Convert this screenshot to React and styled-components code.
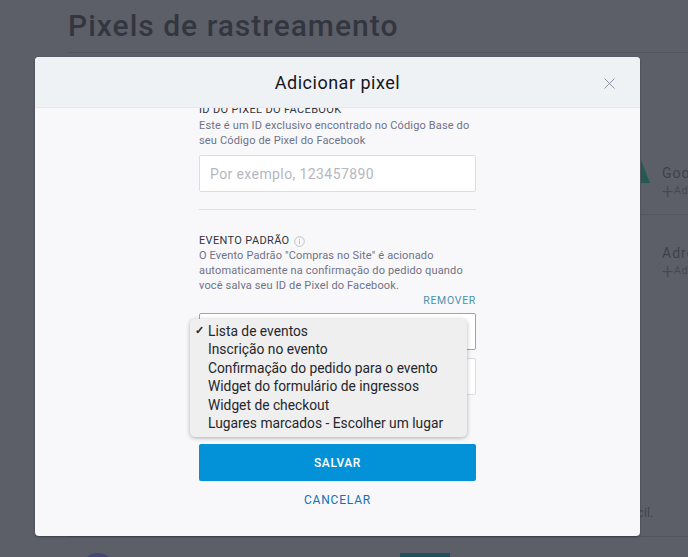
import React from 'react'
import styled, { createGlobalStyle } from 'styled-components'

const events = [
    'Lista de eventos',
    'Inscrição no evento',
    'Confirmação do pedido para o evento',
    'Widget do formulário de ingressos',
    'Widget de checkout',
    'Lugares marcados - Escolher um lugar',
]

const App = () => {
    return (
        <Page>
            <GlobalStyle />
            <Title>Pixels de rastreamento</Title>
            <Listing>
                <ListRow>
                    <Triangle />
                    <ListName>Google</ListName>
                    <ListAdd><span>+</span>Adicionar</ListAdd>
                </ListRow>
                <ListRow>
                    <ListName>Adroll</ListName>
                    <ListAdd><span>+</span>Adicionar</ListAdd>
                </ListRow>
            </Listing>
            <Footnote>fácil.</Footnote>
            <BottomRow>
                <Avatar />
                <BottomChip />
            </BottomRow>

            <Modal>
                <ModalHeader>
                    <ModalTitle>Adicionar pixel</ModalTitle>
                    <CloseButton aria-label="Fechar">
                        <svg width="11" height="11" viewBox="0 0 11 11">
                            <path d="M0.5 0.5 L10.5 10.5 M10.5 0.5 L0.5 10.5" stroke="#85889a" strokeWidth="0.9" fill="none" />
                        </svg>
                    </CloseButton>
                </ModalHeader>
                <ModalBody>
                    <Column>
                        <ScrolledLabel>ID DO PIXEL DO FACEBOOK</ScrolledLabel>
                        <Help>
                            Este é um ID exclusivo encontrado no Código Base do<br />
                            seu Código de Pixel do Facebook
                        </Help>
                        <Input placeholder="Por exemplo, 123457890" />
                        <Divider />
                        <Label>
                            EVENTO PADRÃO
                            <svg width="11" height="11" viewBox="0 0 11 11">
                                <circle cx="5.5" cy="5.5" r="4.8" stroke="#a9acb8" strokeWidth="0.7" fill="none" />
                                <path d="M5.5 4.6 V8 M5.5 2.9 V3.8" stroke="#a9acb8" strokeWidth="0.8" />
                            </svg>
                        </Label>
                        <Help $flush>
                            O Evento Padrão "Compras no Site" é acionado<br />
                            automaticamente na confirmação do pedido quando<br />
                            você salva seu ID de Pixel do Facebook.
                        </Help>
                        <RemoveLink>REMOVER</RemoveLink>
                        <SelectWrap>
                            <SelectBox $focused />
                            <Menu>
                                {events.map((name, id) => (
                                    <MenuItem key={id} $checked={id === 0}>{name}</MenuItem>
                                ))}
                            </Menu>
                        </SelectWrap>
                        <SelectBox />
                        <SaveButton>SALVAR</SaveButton>
                        <CancelLink>CANCELAR</CancelLink>
                    </Column>
                </ModalBody>
            </Modal>
        </Page>
    )
}

const GlobalStyle = createGlobalStyle`
    html, body {
        margin: 0;
        padding: 0;
    }

    * {
        box-sizing: border-box;
    }

    body {
        font-family: "Roboto", "Liberation Sans", sans-serif;
    }
`

const Page = styled.div`
    position: relative;
    width: 688px;
    height: 557px;
    overflow: hidden;
    background: #5c5f68;
    padding: 10px 0 0 68px;
`

const Title = styled.h1`
    margin: 0;
    height: 43px;
    border-bottom: 1px solid #53565f;
    font-size: 30px;
    font-weight: 500;
    line-height: 32px;
    letter-spacing: 1px;
    color: #33363f;
`

const Listing = styled.div`
    margin: 105px 0 0 573px;
    width: 47px;
    white-space: nowrap;
`

const ListRow = styled.div`
    position: relative;
    height: 56px;
    padding-top: 5px;

    & + & {
        border-top: 1px solid #54575f;
        padding-top: 28px;
        height: 100px;
    }
`

const ListName = styled.div`
    margin-left: 21px;
    font-size: 14px;
    line-height: 20px;
    letter-spacing: 1px;
    color: #3e414b;
`

const ListAdd = styled.div`
    display: flex;
    align-items: center;
    margin-left: 21px;
    font-size: 11px;
    line-height: 16px;
    letter-spacing: 0.5px;
    color: #454852;

    span {
        width: 13px;
        font-size: 20px;
        font-weight: 300;
    }
`

const Triangle = styled.div`
    position: absolute;
    left: 0;
    top: 2px;
    width: 9px;
    height: 23px;
    background: #26594f;
    clip-path: polygon(0 0, 100% 100%, 0 100%);
`

const Footnote = styled.div`
    margin: 190px 0 0 558px;
    font-size: 12px;
    line-height: 18px;
    letter-spacing: 0.3px;
    color: #41444e;
`

const BottomRow = styled.div`
    display: flex;
    align-items: flex-start;
    margin-top: 14px;
    border-top: 1px solid #53565f;
    padding: 16px 0 0 13px;
`

const Avatar = styled.div`
    width: 34px;
    height: 34px;
    border-radius: 50%;
    background: #45477a;
`

const BottomChip = styled.div`
    width: 50px;
    height: 20px;
    margin-left: 285px;
    background: #27505f;
`

const Modal = styled.div`
    position: absolute;
    left: 35px;
    top: 57px;
    width: 605px;
    height: 479px;
    display: flex;
    flex-direction: column;
    border-radius: 4px;
    overflow: hidden;
    background: #f8f8fa;
    box-shadow: 0 1px 2px rgba(30, 32, 40, 0.5);
`

const ModalHeader = styled.div`
    position: relative;
    flex: 0 0 51px;
    display: flex;
    align-items: center;
    justify-content: center;
    background: #eff2f5;
    border-bottom: 1px solid #e6e8ec;
`

const ModalTitle = styled.h2`
    margin: 0;
    font-size: 18px;
    font-weight: 400;
    letter-spacing: 0.5px;
    color: #14161f;
`

const CloseButton = styled.div`
    position: absolute;
    right: 25px;
    top: 21px;
    height: 11px;
    line-height: 0;
`

const ModalBody = styled.div`
    flex: 1;
    overflow: hidden;
`

const Column = styled.div`
    width: 277px;
    margin: -5px 0 0 164px;
    display: flex;
    flex-direction: column;
`

const Label = styled.div`
    display: flex;
    align-items: center;
    gap: 4px;
    font-size: 11px;
    line-height: 14px;
    letter-spacing: 0.35px;
    color: #32343e;
`

const ScrolledLabel = styled(Label)`
    height: 14px;
`

const Help = styled.p`
    margin: ${props => props.$flush ? '0' : '1px'} 0 0;
    font-size: 11px;
    line-height: 15px;
    letter-spacing: 0.15px;
    white-space: nowrap;
    color: #6f7287;
`

const Input = styled.input`
    height: 37px;
    margin-top: 7px;
    padding: 0 10px;
    border: 1px solid #dbdde2;
    border-radius: 2px;
    background: #fff;
    font-family: "Roboto", sans-serif;
    font-size: 14px;
    letter-spacing: 0.4px;

    &::placeholder {
        color: #b5b7c0;
        opacity: 1;
    }
`

const Divider = styled.div`
    height: 1px;
    margin: 17px 0 24px;
    background: #dddfe4;
`

const RemoveLink = styled.div`
    margin-top: 1px;
    text-align: right;
    font-size: 10.5px;
    line-height: 14px;
    letter-spacing: 0.7px;
    color: #4a93a8;
`

const SelectWrap = styled.div`
    position: relative;
    margin: 5px 0 8px;
`

const SelectBox = styled.div`
    height: 37px;
    border: 1px solid ${props => props.$focused ? '#6fb0e6' : '#dbdde2'};
    border-radius: 2px;
    background: #fff;
`

const Menu = styled.ul`
    position: absolute;
    left: -9px;
    top: 6px;
    width: 277px;
    height: 118px;
    margin: 0;
    padding: 3px 0 0;
    list-style: none;
    border-radius: 5px;
    background: #efefef;
    box-shadow: 0 1px 4px rgba(0, 0, 0, 0.3);
`

const MenuItem = styled.li`
    position: relative;
    padding-left: 18px;
    font-size: 13.8px;
    line-height: 18.45px;
    color: #26262c;

    &::before {
        content: ${props => props.$checked ? '"✓"' : 'none'};
        position: absolute;
        left: 5px;
        font-size: 11px;
        font-weight: 700;
    }
`

const SaveButton = styled.button`
    height: 37px;
    margin-top: 49px;
    border: 0;
    border-radius: 2px;
    background: #0392d8;
    font-family: "Roboto", sans-serif;
    font-size: 12px;
    font-weight: 500;
    letter-spacing: 0.6px;
    color: #fff;
`

const CancelLink = styled.div`
    margin-top: 11px;
    text-align: center;
    font-size: 12px;
    font-weight: 400;
    line-height: 16px;
    letter-spacing: 0.8px;
    color: #1273ae;
`

export default App
